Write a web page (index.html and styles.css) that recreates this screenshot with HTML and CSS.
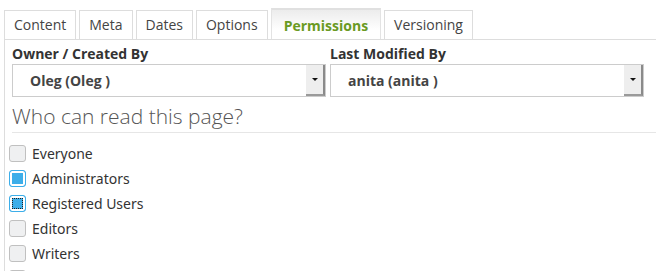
FILE: index.html
```html
<!DOCTYPE html>
<html lang="en">
<head>
    <meta charset="UTF-8">
    <title>Page Permissions</title>
    <link rel="stylesheet" href="styles.css">
</head>
<body>
    <ul class="tabs">
        <li class="tab">Content</li>
        <li class="tab">Meta</li>
        <li class="tab">Dates</li>
        <li class="tab">Options</li>
        <li class="tab active">Permissions</li>
        <li class="tab">Versioning</li>
    </ul>

    <div class="panel">
        <div class="owners">
            <div class="field">
                <label>Owner / Created By</label>
                <div class="select">
                    <span>Oleg (Oleg )</span>
                    <span class="arrow"></span>
                </div>
            </div>
            <div class="field">
                <label>Last Modified By</label>
                <div class="select">
                    <span>anita (anita )</span>
                    <span class="arrow"></span>
                </div>
            </div>
        </div>

        <h2>Who can read this page?</h2>

        <!-- groups -->
        <ul class="groups">
            <li><span class="check"></span>Everyone</li>
            <li><span class="check on"></span>Administrators</li>
            <li><span class="check on focus"></span>Registered Users</li>
            <li><span class="check"></span>Editors</li>
            <li><span class="check"></span>Writers</li>
            <li><span class="check"></span>Readers</li>
        </ul>
    </div>
</body>
</html>
```

FILE: styles.css
```css
/* CSS */
* {
    box-sizing: border-box;
}

body {
    margin: 0;
    font-family: "Open Sans", sans-serif;
    color: #444;
    background: #fff;
    overflow: hidden;
}

.tabs {
    display: flex;
    align-items: flex-end;
    list-style: none;
    margin: 0;
    padding: 8px 0 0 4px;
    height: 39px;
}

.tab {
    height: 29px;
    padding: 0 9px;
    margin-right: 3px;
    border: 1px solid #ddd;
    border-bottom: none;
    font-size: 14px;
    line-height: 28px;
    color: #444;
}

.active {
    height: 31px;
    line-height: 31px;
    padding: 0 12px;
    font-weight: bold;
    color: #6a9a23;
    border-color: #e3e3e3;
    border-top: 2px solid #e0e0e0;
    background: linear-gradient(#ececec, #fff 70%);
}

.panel {
    margin-left: 4px;
    border-top: 1px solid #ddd;
    border-left: 1px solid #ddd;
    padding: 4px 0 0 7px;
    height: 240px;
}

.owners {
    display: flex;
    gap: 4px;
}

.field {
    width: 314px;
}

.field label {
    display: block;
    font-size: 14px;
    font-weight: bold;
    line-height: 20px;
    color: #333;
}

.select {
    display: flex;
    justify-content: space-between;
    height: 33px;
    border: 1px solid #ccc;
    padding-left: 17px;
    font-size: 14px;
    font-weight: bold;
    line-height: 31px;
    color: #444;
}

.arrow {
    position: relative;
    width: 19px;
    background: #eee;
    border-right: 2px solid #8a8a8a;
    border-bottom: 2px solid #9a9a9a;
}

.arrow::after {
    content: "";
    position: absolute;
    left: 6px;
    top: 13px;
    border-left: 3px solid transparent;
    border-right: 3px solid transparent;
    border-top: 3px solid #111;
}

h2 {
    margin: 7px 0 0;
    padding-bottom: 3px;
    border-bottom: 1px solid #e6e6e6;
    font-size: 21px;
    font-weight: 300;
    line-height: 25px;
    color: #555;
}

.groups {
    list-style: none;
    margin: 8px 0 0 -3px;
    padding: 0;
}

.groups li {
    display: flex;
    align-items: center;
    height: 25px;
    font-family: "Noto Sans", sans-serif;
    font-size: 14px;
    color: #333;
}

.check {
    width: 17px;
    height: 17px;
    margin-right: 6px;
    border: 1px solid #c0c0c0;
    border-radius: 3px;
    background: #eff0f1;
}

.check.on {
    border-color: #3daee9;
    background: #3daee9;
    box-shadow: inset 0 0 0 2px #fff;
}

.check.focus {
    outline: 1px dotted #222;
    outline-offset: -4px;
}
```
